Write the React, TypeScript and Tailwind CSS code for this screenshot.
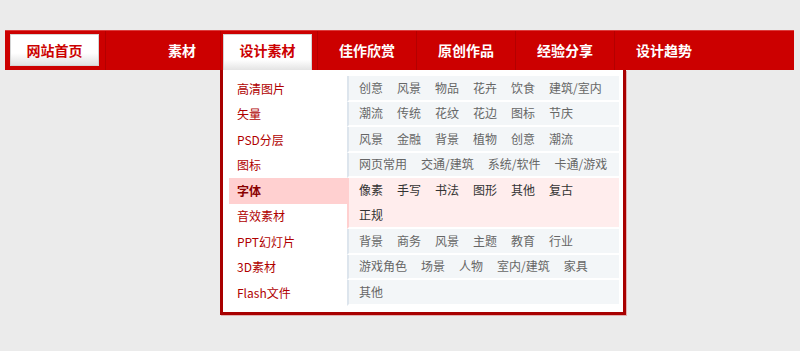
import React from "react";

const F = { fontFamily: '"Noto Sans CJK SC", "Noto Sans", sans-serif' };

const cats = ["高清图片", "矢量", "PSD分层", "图标", "字体", "音效素材", "PPT幻灯片", "3D素材", "Flash文件"];

const rows: { lines: string[][]; pink?: boolean }[] = [
  { lines: [["创意", "风景", "物品", "花卉", "饮食", "建筑/室内"]] },
  { lines: [["潮流", "传统", "花纹", "花边", "图标", "节庆"]] },
  { lines: [["风景", "金融", "背景", "植物", "创意", "潮流"]] },
  { lines: [["网页常用", "交通/建筑", "系统/软件", "卡通/游戏"]] },
  { lines: [["像素", "手写", "书法", "图形", "其他", "复古"], ["正规"]], pink: true },
  { lines: [["背景", "商务", "风景", "主题", "教育", "行业"]] },
  { lines: [["游戏角色", "场景", "人物", "室内/建筑", "家具"]] },
  { lines: [["其他"]] },
];

const navItems = ["佳作欣赏", "原创作品", "经验分享", "设计趋势"];

export default function App() {
  return (
    <div className="w-[800px] h-[351px] bg-[#ebebeb] pt-[30px] pl-[5px] overflow-hidden" style={F}>
      <div className="relative w-[789px]">
        <div className="flex h-[40px] bg-[#cc0000] border-t border-[#dc3c3c]">
          <div className="w-[100px] flex items-start pt-[3px] pl-[5px]">
            <div className="w-[89px] h-[32px] border border-[#d4d4d4] bg-gradient-to-b from-white from-60% to-[#e2e2e2] flex items-center justify-center text-[14px] font-bold text-[#cc0000]">
              网站首页
            </div>
          </div>
          <div className="w-[115px] border-l border-[#b40000] flex items-center pl-[62px] text-[14px] font-bold text-white">
            素材
          </div>
          <div className="w-[97px] border-l border-[#b40000] flex items-start pt-[3px] pl-[2px]">
            <div className="w-[89px] h-[36px] border border-b-0 border-[#d4d4d4] bg-gradient-to-b from-white from-70% to-[#e4e4e4] flex items-center justify-center pb-[4px] text-[14px] font-bold text-[#cc0000]">
              设计素材
            </div>
          </div>
          {navItems.map((t) => (
            <div key={t} className="w-[99px] border-l border-[#b40000] flex items-center justify-center text-[14px] font-bold text-white">
              {t}
            </div>
          ))}
        </div>

        <div className="absolute left-[215px] top-[40px] w-[406px] h-[245px] border-[3px] border-t-0 border-[#a80000] bg-white shadow-[1px_1px_0_#e2b0b0] pt-[6px] pl-[6px] pr-[4px] pb-[5px] flex">
          <div className="w-[118px] flex flex-col">
            {cats.map((c) => (
              <div
                key={c}
                className={
                  "h-[25.5px] flex items-center pl-[8px] text-[12px] " +
                  (c === "字体" ? "bg-[#ffd0d0] font-bold text-[#8a0000]" : "text-[#b00000]")
                }
              >
                {c}
              </div>
            ))}
          </div>
          <div className="w-[272px] flex flex-col">
            {rows.map((r, i) => (
              <div
                key={i}
                className={
                  "border-b-2 border-b-white border-l-2 pl-[10px] flex flex-col gap-y-[2px] text-[12px] " +
                  (r.pink
                    ? "h-[51px] bg-[#ffeded] border-l-[#ffd0d0] text-[#333333]"
                    : "h-[25.5px] bg-[#f3f6f8] border-l-[#dde5ed] text-[#666666]")
                }
              >
                {r.lines.map((line, k) => (
                  <div key={k} className="h-[23.5px] flex items-center gap-x-[14px] whitespace-nowrap">
                    {line.map((t, j) => (
                      <span key={j}>{t}</span>
                    ))}
                  </div>
                ))}
              </div>
            ))}
          </div>
        </div>
      </div>
    </div>
  );
}
